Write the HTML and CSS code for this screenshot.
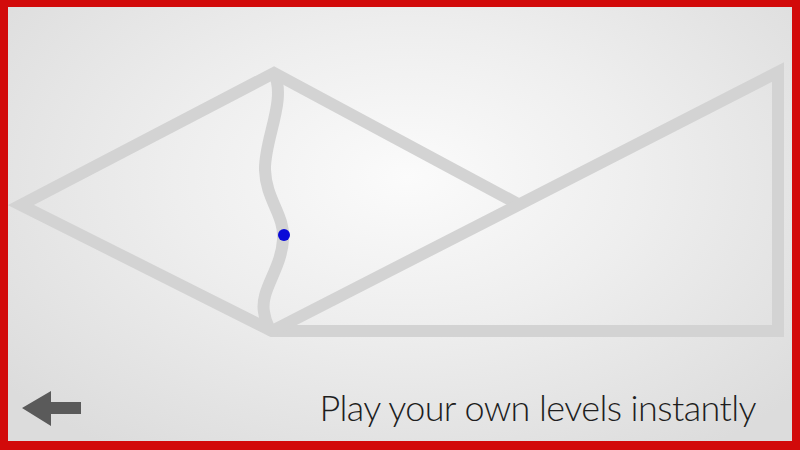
FILE: index.html
```html
<!DOCTYPE html>
<html>
<head>
<meta charset="utf-8">
<link rel="stylesheet" href="styles.css">
</head>
<body>
<div class="frame">
  <svg class="board" viewBox="8 7 784 370" width="784" height="370">
    <g class="track">
      <polyline points="518,204 274,73 21,205 272,331 784,331"/>
      <polyline points="272,331 778,72 778,336"/>
      <path d="M274,73 C287,100 264,140 265,170 C266,200 285,215 283,240 C281,270 260,290 264,312 C266,324 270,330 272,331"/>
    </g>
    <circle class="dot" cx="284" cy="235" r="6"/>
  </svg>
  <div class="footer">
    <svg class="back" viewBox="0 0 60 36" width="60" height="36">
      <polygon points="0,17 29,0 29,11 59,11 59,23 29,23 29,35"/>
    </svg>
    <div class="caption">Play your own levels instantly</div>
  </div>
</div>
</body>
</html>
```
FILE: styles.css
```css
html, body {
  margin: 0;
  padding: 0;
}
body {
  width: 800px;
  height: 450px;
  overflow: hidden;
}
.frame {
  box-sizing: border-box;
  width: 800px;
  height: 450px;
  border-style: solid;
  border-color: #d20a0a;
  border-width: 7px 8px 9px 8px;
  background: radial-gradient(ellipse 520px 330px at 400px 170px, #fbfbfb 0%, #eeeeee 45%, #dcdcdc 100%);
  display: flex;
  flex-direction: column;
}
.board {
  display: block;
}
.track polyline,
.track path {
  fill: none;
  stroke: #d3d3d3;
  stroke-width: 12;
  stroke-linecap: butt;
  stroke-linejoin: miter;
  stroke-miterlimit: 20;
}
.dot {
  fill: #0a0ad8;
}
.footer {
  flex: 1;
  display: flex;
  align-items: center;
  justify-content: space-between;
  padding: 0 36px 4px 14px;
}
.back {
  display: block;
  fill: #5a5a5a;
  margin-top: 4px;
}
.caption {
  font-family: Lato, "Liberation Sans", sans-serif;
  font-weight: 300;
  font-size: 36px;
  color: #1e1e1e;
  letter-spacing: -0.6px;
}
```
